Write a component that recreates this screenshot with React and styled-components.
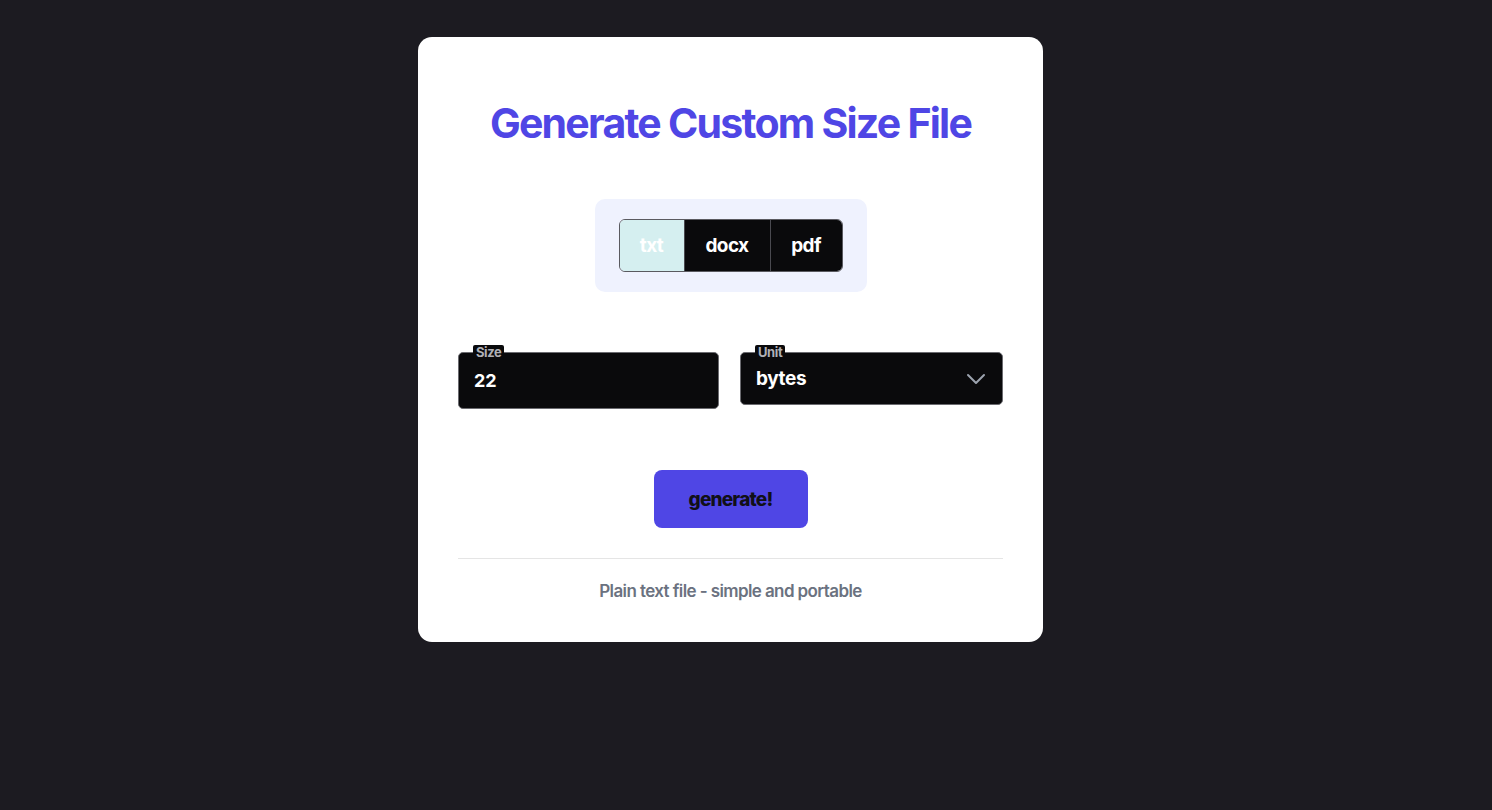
import React, { useState } from 'react'
import styled, { createGlobalStyle } from 'styled-components'

const GlobalStyle = createGlobalStyle`
    html, body {
        margin: 0;
        padding: 0;
        background: #1c1b21;
        font-family: Inter, "Noto Sans", sans-serif;
    }
    * {
        box-sizing: border-box;
    }
`;

const formats = [
    { key: 'txt', width: 64, note: 'Plain text file - simple and portable' },
    { key: 'docx', width: 86, note: 'Word document - rich formatting' },
    { key: 'pdf', width: 72, note: 'PDF document - universal viewing' },
]

function App() {
    const [format, setFormat] = useState('txt')
    const [size, setSize] = useState('22')
    const [unit, setUnit] = useState('bytes')

    const current = formats.find(f => f.key === format)

    return (
        <Page>
            <GlobalStyle />
            <Card>
                <Title>Generate Custom Size File</Title>
                <ToggleWrap>
                    <ToggleGroup>
                        {formats.map(f => (
                            <ToggleButton
                                key={f.key}
                                $active={f.key === format}
                                $width={f.width}
                                onClick={() => setFormat(f.key)}
                            >
                                {f.key}
                            </ToggleButton>
                        ))}
                    </ToggleGroup>
                </ToggleWrap>
                <Fields>
                    <Field $height={57}>
                        <FieldLabel>Size</FieldLabel>
                        <TextInput value={size} onChange={e => setSize(e.target.value)} />
                    </Field>
                    <Field $height={53}>
                        <FieldLabel>Unit</FieldLabel>
                        <Select value={unit} onChange={e => setUnit(e.target.value)}>
                            <option value="bytes">bytes</option>
                            <option value="KB">KB</option>
                            <option value="MB">MB</option>
                            <option value="GB">GB</option>
                        </Select>
                        <Chevron width="20" height="12" viewBox="0 0 20 12" fill="none">
                            <path d="M2 2 L10 10 L18 2" stroke="#9ca3af" strokeWidth="2" strokeLinecap="round" strokeLinejoin="round" />
                        </Chevron>
                    </Field>
                </Fields>
                <Actions>
                    <GenerateButton>generate!</GenerateButton>
                </Actions>
                <Divider />
                <Note>{current.note}</Note>
            </Card>
        </Page>
    )
}

const Page = styled.div`
    min-height: 100vh;
    display: flex;
    justify-content: center;
    align-items: flex-start;
    padding-top: 37px;
    padding-right: 31px;
`;

const Card = styled.div`
    width: 625px;
    background: #fff;
    border-radius: 14px;
    padding: 60px 40px 38px;
    display: flex;
    flex-direction: column;
    align-items: stretch;
`;

const Title = styled.h1`
    margin: 0;
    text-align: center;
    font-size: 41px;
    font-weight: 700;
    letter-spacing: -1.75px;
    line-height: 52px;
    color: #4f46e5;
`;

const ToggleWrap = styled.div`
    align-self: center;
    margin-top: 50px;
    background: #eff2fe;
    border-radius: 10px;
    padding: 20px 24px;
`;

const ToggleGroup = styled.div`
    display: flex;
    border: 1px solid #5a5a60;
    border-radius: 6px;
    overflow: hidden;
    height: 53px;
`;

const ToggleButton = styled.button`
    width: ${p => p.$width}px;
    border: none;
    border-left: 1px solid #4a4a50;
    &:first-child {
        border-left: none;
    }
    background: ${p => p.$active ? '#d5eff0' : '#0a0a0c'};
    color: #fff;
    font-family: inherit;
    font-size: 19px;
    font-weight: 700;
    letter-spacing: -0.6px;
    cursor: pointer;
    padding: 0;
`;

const Fields = styled.div`
    margin-top: 60px;
    display: grid;
    grid-template-columns: 261px 263px;
    justify-content: space-between;
    align-items: start;
`;

const Field = styled.div`
    position: relative;
    height: ${p => p.$height}px;
    background: #0a0a0c;
    border: 1px solid #6b6b70;
    border-radius: 5px;
    display: flex;
    align-items: center;
`;

const FieldLabel = styled.span`
    position: absolute;
    top: -8px;
    left: 14px;
    padding: 0 3px;
    background: #0a0a0c;
    border-radius: 2px;
    color: #b0b0b6;
    font-size: 13px;
    font-weight: 700;
    line-height: 14px;
    letter-spacing: -0.4px;
`;

const TextInput = styled.input`
    width: 100%;
    height: 100%;
    background: transparent;
    border: none;
    outline: none;
    color: #fff;
    font-family: inherit;
    font-size: 18px;
    font-weight: 700;
    padding: 0 15px;
`;

const Select = styled.select`
    appearance: none;
    width: 100%;
    height: 100%;
    background: transparent;
    border: none;
    outline: none;
    color: #fff;
    font-family: inherit;
    font-size: 19px;
    font-weight: 700;
    letter-spacing: -0.4px;
    padding: 0 15px;
    padding-bottom: 1px;
    cursor: pointer;
    option {
        color: #000;
    }
`;

const Chevron = styled.svg`
    position: absolute;
    right: 16px;
    top: 20px;
    pointer-events: none;
`;

const Actions = styled.div`
    display: flex;
    justify-content: center;
    margin-top: 61px;
`;

const GenerateButton = styled.button`
    width: 154px;
    height: 58px;
    background: #4f46e5;
    border: none;
    border-radius: 8px;
    color: #111018;
    font-family: inherit;
    font-size: 19px;
    font-weight: 800;
    letter-spacing: -0.8px;
    cursor: pointer;
    &:hover {
        background: #4338ca;
    }
`;

const Divider = styled.hr`
    margin: 30px 0 0;
    border: none;
    border-top: 1px solid #e5e5e5;
`;

const Note = styled.p`
    margin: 19px 0 0;
    text-align: center;
    color: #6b7280;
    font-size: 17px;
    font-weight: 600;
    letter-spacing: -0.6px;
    line-height: 26px;
`;

export default App;
